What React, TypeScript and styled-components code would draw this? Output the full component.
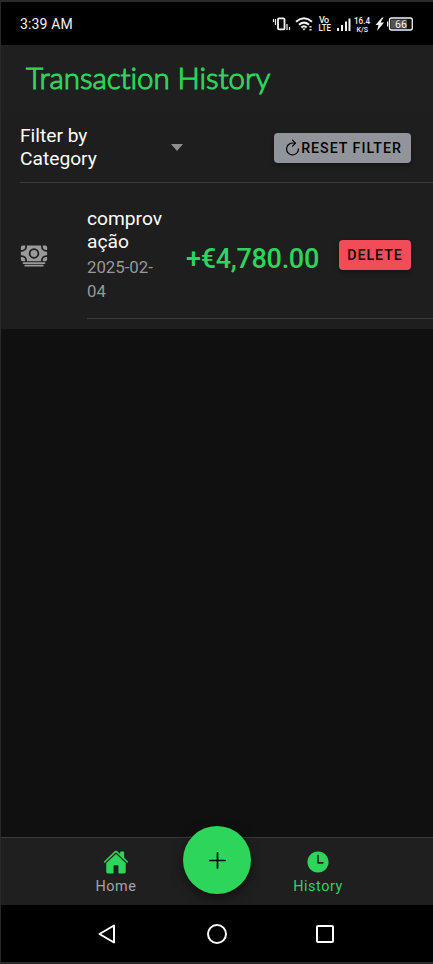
import React from 'react';
import styled, { createGlobalStyle } from 'styled-components';
import { IoAdd, IoCash, IoHome, IoRefreshOutline, IoTime } from 'react-icons/io5';

const GREEN = '#2dd55b';

const GlobalStyle = createGlobalStyle`
  * { box-sizing: border-box; }
  body { margin: 0; background: #000; font-family: Roboto, "Liberation Sans", sans-serif; }
  button { font-family: inherit; border: 0; padding: 0; }
`;

const Screen = styled.div`
  width: 433px;
  height: 964px;
  display: flex;
  flex-direction: column;
  border: solid #292929;
  border-width: 2px 0 2px 1px;
  background: #101010;
  overflow: hidden;
`;

const StatusBar = styled.div`
  height: 43px;
  flex: none;
  display: flex;
  align-items: center;
  justify-content: space-between;
  padding: 0 19px;
  background: #000;
  color: #f2f2f2;
`;

const Clock = styled.span`
  font-size: 14px;
  letter-spacing: 0.15px;
`;

const StatusIcons = styled.svg`
  display: block;
  width: 142px;
  height: 20px;
  font-family: Roboto, sans-serif;
  font-weight: 500;
`;

const Header = styled.header`
  height: 68px;
  flex: none;
  padding: 14px 0 0 25px;
  background: #1f1f1f;
`;

const Title = styled.h1`
  margin: 0;
  width: max-content;
  font: 300 29.5px/38px Lato, sans-serif;
  font-variant-ligatures: none;
  letter-spacing: -0.05px;
  color: ${GREEN};
  -webkit-text-stroke: 1.1px ${GREEN};
  stroke-linejoin: round;
`;

const FilterRow = styled.div`
  height: 70px;
  flex: none;
  padding-left: 19px;
  background: #1e1e1e;
`;

const FilterInner = styled.div`
  height: 70px;
  display: flex;
  align-items: center;
  border-bottom: 1px solid #3a3a3a;
  padding-right: 22px;
`;

const FilterLabel = styled.div`
  width: 110px;
  padding-bottom: 2px;
  font-size: 19.2px;
  line-height: 23px;
  color: #fff;
`;

const Caret = styled.div`
  margin-left: 41px;
  border: solid transparent;
  border-width: 7px 6px 0;
  border-top-color: #8e8e8e;
`;

const ActionButton = styled.button<{ $tone: string; $width: number }>`
  margin-left: auto;
  width: ${(p) => p.$width}px;
  height: 30px;
  display: flex;
  align-items: center;
  justify-content: center;
  border-radius: 4px;
  background: ${(p) => p.$tone};
  color: #000;
  font-size: 14.2px;
  font-weight: 500;
  letter-spacing: 0.98px;
  box-shadow: 0 2px 4px rgba(0, 0, 0, 0.35);
  white-space: nowrap;
  svg { flex: none; margin: 0 -1px 0 0; }
`;

const Entry = styled.div`
  height: 146px;
  flex: none;
  display: flex;
  background: #1e1e1e;
  padding: 0 0 10px 19px;
`;

const EntryIcon = styled.div`
  width: 67px;
  flex: none;
  padding-top: 59px;
  color: #9a9a9a;
  svg { display: block; }
`;

const EntryBody = styled.div`
  flex: 1;
  display: flex;
  align-items: center;
  padding: 8px 22px 0 0;
  border-bottom: 1px solid #3a3a3a;
`;

const EntryText = styled.div`
  width: 77px;
  color: #fff;
  font-size: 19.2px;
  line-height: 23px;
`;

const EntryDate = styled.div`
  padding-top: 2px;
  font-size: 16.8px;
  line-height: 24px;
  color: #989898;
`;

const Amount = styled.div`
  margin-left: 22px;
  padding-top: 8px;
  color: ${GREEN};
  font-size: 27px;
  font-weight: 500;
  letter-spacing: -0.3px;
  white-space: nowrap;
`;

const Empty = styled.div`
  flex: 1;
`;

const TabBar = styled.nav`
  position: relative;
  height: 68px;
  flex: none;
  display: flex;
  justify-content: center;
  gap: 103px;
  background: #1f1f1f;
  border-top: 1px solid #3a3a3a;
`;

const Tab = styled.div<{ $active?: boolean }>`
  width: 99px;
  display: flex;
  flex-direction: column;
  align-items: center;
  padding-top: 11px;
  color: ${(p) => (p.$active ? GREEN : '#a4a4a4')};
  font-size: 14.4px;
  line-height: 20px;
  letter-spacing: 0.55px;
  svg { display: block; margin-bottom: 2px; color: ${GREEN}; }
`;

const AddButton = styled.button`
  position: absolute;
  top: -12px;
  left: 182px;
  width: 68px;
  height: 68px;
  display: flex;
  align-items: center;
  justify-content: center;
  border-radius: 50%;
  background: ${GREEN};
  color: #000;
  box-shadow: 0 4px 12px rgba(0, 0, 0, 0.5);
`;

const SystemNav = styled.div`
  height: 57px;
  flex: none;
  display: flex;
  justify-content: center;
  align-items: center;
  gap: 84px;
  background: #000;
`;

const NavGlyph = styled.svg`
  width: 24px;
  height: 24px;
  fill: none;
  stroke: #fff;
  stroke-width: 2;
  stroke-linejoin: round;
`;

export default function App() {
  return (
    <>
      <GlobalStyle />
      <Screen>
        <StatusBar>
          <Clock>3:39 AM</Clock>
          <StatusIcons viewBox="0 0 142 20" fill="#f2f2f2">
            <g fill="none" stroke="#f2f2f2">
              <rect x="6" y="4.3" width="6.5" height="11" rx="1" strokeWidth="1.8" />
              <path d="M1.5 5v3M3.5 5v6M15 10v6M17.500 13v3" strokeWidth="1.2" />
              <path d="M24 7.700Q32 .8 40 7.700M27 10.800Q32 6.500 37 10.800M29.300 13.500Q32 11 34.700 13.500" strokeWidth="2" />
            </g>
            <path d="M30.300 14.500h3.400l-1.700 2zM37.500 12h2v1.500h-2zM37.500 15h2v1.500h-2z" />
            <text x="47" y="8.500" fontSize="9" textLength="10">Vo</text>
            <text x="46.500" y="17" fontSize="9" textLength="12.500" lengthAdjust="spacingAndGlyphs">LTE</text>
            <path d="M65 14h2v3h-2zM69 11h2v6h-2zM73 7.500h2V17h-2zM76.500 4.500h2V17h-2z" />
            <text x="82" y="9.500" fontSize="8.800" textLength="16" lengthAdjust="spacingAndGlyphs">16.4</text>
            <text x="84.500" y="17.500" fontSize="7" textLength="11.500" lengthAdjust="spacingAndGlyphs">K/S</text>
            <path d="M110 3.500l-6.500 7.500h3l-1.500 6 7-8.500h-3.500l3-5z" />
            <path d="M115 7.500h1.300v5H115z" />
            <rect x="117.500" y="4" width="22.800" height="12" rx="2" fill="#111" stroke="#f2f2f2" strokeWidth="1.300" />
            <path d="M119 5.500h16v9h-16z" fill="#555" />
            <text x="129" y="13.700" fontSize="10.500" fontWeight="400" textAnchor="middle">66</text>
          </StatusIcons>
        </StatusBar>

        <Header>
          <Title>Transaction History</Title>
        </Header>

        <FilterRow>
          <FilterInner>
            <FilterLabel>Filter by Category</FilterLabel>
            <Caret />
            <ActionButton $tone="#92949c" $width={137}>
              <IoRefreshOutline size={19} />
              RESET FILTER
            </ActionButton>
          </FilterInner>
        </FilterRow>

        <Entry>
          <EntryIcon>
            <IoCash size={28} />
          </EntryIcon>
          <EntryBody>
            <EntryText>
              comprov<br />ação
              <EntryDate>2025-02-<br />04</EntryDate>
            </EntryText>
            <Amount>+€4,780.00</Amount>
            <ActionButton $tone="#f24c58" $width={72}>DELETE</ActionButton>
          </EntryBody>
        </Entry>

        <Empty />

        <TabBar>
          <Tab>
            <IoHome size={26} />
            Home
          </Tab>
          <AddButton>
            <IoAdd size={27} />
          </AddButton>
          <Tab $active>
            <IoTime size={26} />
            History
          </Tab>
        </TabBar>

        <SystemNav>
          <NavGlyph viewBox="0 0 24 24"><path d="M2.500 12L17 3.500v17z" /></NavGlyph>
          <NavGlyph viewBox="0 0 24 24"><circle cx="12" cy="12" r="9" /></NavGlyph>
          <NavGlyph viewBox="0 0 24 24"><rect x="4" y="4" width="16" height="16" rx="1" /></NavGlyph>
        </SystemNav>
      </Screen>
    </>
  );
}
